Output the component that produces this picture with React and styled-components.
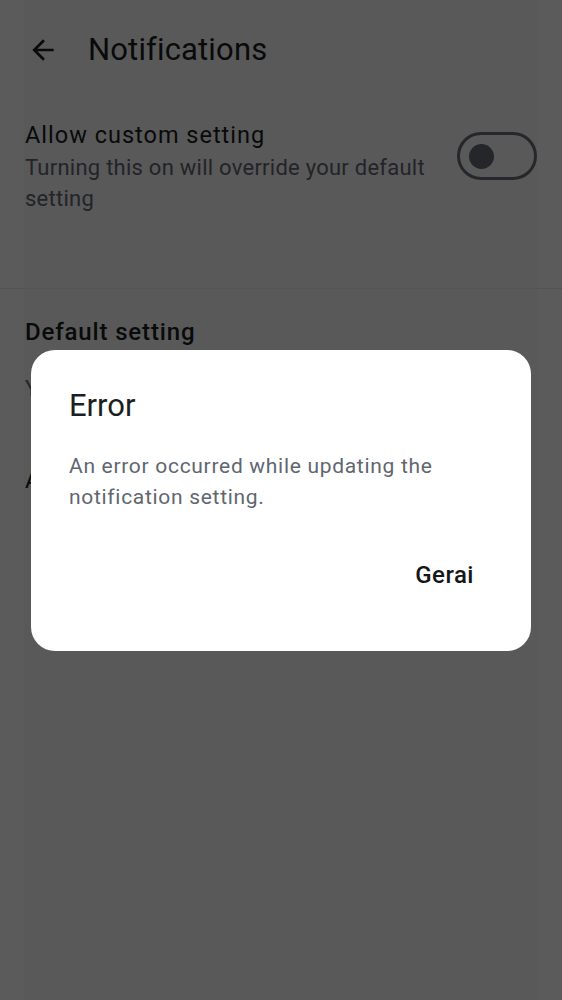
import React from "react";
import styled, { createGlobalStyle } from "styled-components";

const GlobalStyle = createGlobalStyle`
  html, body {
    margin: 0;
    padding: 0;
    background: #ffffff;
  }
  body {
    font-family: Roboto, "Noto Sans", "Liberation Sans", sans-serif;
    -webkit-font-smoothing: antialiased;
  }
  * { box-sizing: border-box; }
`;

const Page = styled.div`
  position: relative;
  width: 562px;
  height: 1000px;
  overflow: hidden;
  background: linear-gradient(
    to right,
    #ffffff 24px,
    #f9f9f9 24px,
    #f9f9f9 537px,
    #ffffff 537px
  );
  color: #1a1c1e;
`;

const Header = styled.header`
  display: flex;
  align-items: center;
  height: 86px;
  padding: 14px 0 0 27px;
`;

const BackButton = styled.button`
  display: flex;
  align-items: center;
  justify-content: center;
  width: 32px;
  height: 32px;
  padding: 0;
  border: none;
  background: transparent;
  color: #1a1c1e;
`;

const HeaderTitle = styled.h1`
  margin: 0 0 0 29px;
  font-size: 31px;
  line-height: 40px;
  font-weight: 400;
  letter-spacing: 0.15px;
  color: #1a1c1e;
`;

const Section = styled.section`
  padding: 0 25px;
`;

const SettingRow = styled.div`
  display: flex;
  align-items: flex-start;
  justify-content: space-between;
  gap: 24px;
  padding: 33px 25px 74px 25px;
`;

const RowText = styled.div`
  flex: 1;
  min-width: 0;
`;

const RowTitle = styled.div`
  font-size: 23.5px;
  line-height: 33px;
  letter-spacing: 1px;
  color: #1a1c1e;
`;

const RowSubtitle = styled.div`
  font-size: 22px;
  line-height: 31px;
  letter-spacing: 0.25px;
  color: #5f6670;
`;

const Switch = styled.div`
  flex: none;
  display: flex;
  align-items: center;
  width: 80px;
  height: 48px;
  margin-top: 13px;
  padding-left: 9px;
  border: 3px solid #686f7a;
  border-radius: 24px;
`;

const Knob = styled.span`
  width: 25px;
  height: 25px;
  border-radius: 50%;
  background: #656c77;
`;

const Divider = styled.hr`
  margin: 0;
  border: none;
  border-top: 1px solid #ebebeb;
`;

const SectionTitle = styled.h2`
  margin: 27px 0 0;
  font-size: 24px;
  line-height: 32px;
  font-weight: 500;
  letter-spacing: 0.85px;
  color: #1a1c1e;
`;

const SectionText = styled.p`
  margin: 25px 0 0;
  font-size: 22px;
  line-height: 31px;
  letter-spacing: 0.25px;
  color: #5f6670;
`;

const OptionLabel = styled.div`
  margin: ${(p) => p.$mt || "29px"} 0 0;
  font-size: 23.5px;
  line-height: 33px;
  letter-spacing: 1px;
  color: #1a1c1e;
`;

const Scrim = styled.div`
  position: absolute;
  inset: 0;
  display: flex;
  align-items: center;
  justify-content: center;
  background: rgba(0, 0, 0, 0.643);
`;

const Dialog = styled.div`
  display: flex;
  flex-direction: column;
  width: 500px;
  padding: 38px 43px 52px 38px;
  border-radius: 24px;
  background: #ffffff;
`;

const DialogTitle = styled.h3`
  margin: 0;
  font-size: 31px;
  line-height: 36px;
  font-weight: 400;
  color: #1c1e21;
`;

const DialogBody = styled.p`
  margin: 27px 0 0;
  font-size: 21px;
  line-height: 31px;
  letter-spacing: 0.7px;
  color: #5f6670;
`;

const Actions = styled.div`
  display: flex;
  justify-content: flex-end;
  margin-top: 38px;
`;

const TextButton = styled.button`
  height: 48px;
  padding: 0 14px;
  border: none;
  background: transparent;
  font-family: inherit;
  font-size: 24px;
  font-weight: 500;
  letter-spacing: 0.5px;
  color: #151618;
`;

const ArrowBack = () => (
  <svg width="32" height="32" viewBox="0 0 24 24" fill="currentColor">
    <path d="M20 11H7.83l5.59-5.59L12 4l-8 8 8 8 1.41-1.41L7.83 13H20v-2z" />
  </svg>
);

export default function App() {
  return (
    <>
      <GlobalStyle />
      <Page>
        <Header>
          <BackButton aria-label="Back">
            <ArrowBack />
          </BackButton>
          <HeaderTitle>Notifications</HeaderTitle>
        </Header>

        <SettingRow>
          <RowText>
            <RowTitle>Allow custom setting</RowTitle>
            <RowSubtitle>
              Turning this on will override your default setting
            </RowSubtitle>
          </RowText>
          <Switch role="switch" aria-checked="false">
            <Knob />
          </Switch>
        </SettingRow>

        <Divider />

        <Section>
          <SectionTitle>Default setting</SectionTitle>
          <SectionText>You will be notified about all activity</SectionText>
          <OptionLabel $mt="60px">All notifications</OptionLabel>
        </Section>

        <Scrim>
          <Dialog role="alertdialog">
            <DialogTitle>Error</DialogTitle>
            <DialogBody>
              An error occurred while updating the notification setting.
            </DialogBody>
            <Actions>
              <TextButton>Gerai</TextButton>
            </Actions>
          </Dialog>
        </Scrim>
      </Page>
    </>
  );
}
